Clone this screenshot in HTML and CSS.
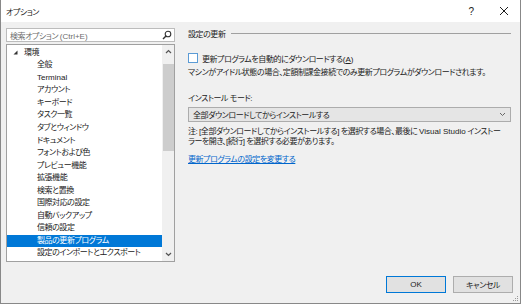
FILE: index.html
```html
<!DOCTYPE html>
<html>
<head>
  <title>オプション</title>
  <link rel="stylesheet" href="styles.css">
</head>
<body>
  <div class="window">
    <div class="titlebar">
      <span class="title">オプション</span>
      <span class="help en">?</span>
      <svg class="close" width="10" height="10" viewBox="0 0 10 10">
        <path d="M1 1 L9 9 M9 1 L1 9" stroke="#1e1e1e" stroke-width="1" fill="none"/>
      </svg>
    </div>

    <div class="content">
      <div class="left">
        <div class="search">
          <span class="placeholder">検索オプション <span class="en">(Ctrl+E)</span></span>
          <svg width="10" height="10" viewBox="0 0 10 10">
            <circle cx="6" cy="4" r="2.8" stroke="#333" stroke-width="1.1" fill="none"/>
            <path d="M4 6 L1 9" stroke="#333" stroke-width="1.4"/>
          </svg>
        </div>

        <div class="tree">
          <div class="items">
            <div class="row root">
              <svg class="twisty" width="5" height="5" viewBox="0 0 5 5"><polygon points="4.5,0.5 4.5,4.5 0.5,4.5" fill="#333"/></svg>
              環境
            </div>
            <div class="row">全般</div>
            <div class="row en">Terminal</div>
            <div class="row">アカウント</div>
            <div class="row">キーボード</div>
            <div class="row">タスク一覧</div>
            <div class="row">タブとウィンドウ</div>
            <div class="row">ドキュメント</div>
            <div class="row">フォントおよび色</div>
            <div class="row">プレビュー機能</div>
            <div class="row">拡張機能</div>
            <div class="row">検索と置換</div>
            <div class="row">国際対応の設定</div>
            <div class="row">自動バックアップ</div>
            <div class="row">信頼の設定</div>
            <div class="row selected">製品の更新プログラム</div>
            <div class="row">設定のインポートとエクスポート</div>
          </div>
          <div class="scrollbar">
            <svg class="arrow" width="11" height="16" viewBox="0 0 11 16"><path d="M3 8 L5.5 5.5 L8 8" stroke="#555" stroke-width="1.2" fill="none"/></svg>
            <div class="thumb"></div>
            <div class="track"></div>
            <svg class="arrow" width="11" height="14" viewBox="0 0 11 14"><path d="M3 6 L5.5 8.5 L8 6" stroke="#555" stroke-width="1.2" fill="none"/></svg>
          </div>
        </div>
      </div>

      <div class="right">
        <div class="heading">
          <span>設定の更新</span>
          <div class="rule"></div>
        </div>

        <label class="check">
          <span class="box"></span>
          <span>更新プログラムを自動的にダウンロードする<span class="en">(<u>A</u>)</span></span>
        </label>
        <p class="desc">マシンがアイドル状態の場合、定額制課金接続でのみ更新プログラムがダウンロードされます。</p>

        <p class="label">インストール モード:</p>
        <div class="select">
          <span>全部ダウンロードしてからインストールする</span>
          <svg width="7" height="5" viewBox="0 0 7 5"><path d="M1 1 L3.5 3.5 L6 1" stroke="#666" stroke-width="1" fill="none"/></svg>
        </div>

        <p class="note">注: [全部ダウンロードしてからインストールする] を選択する場合、最後に <span class="en">Visual Studio</span> インストー<br>ラーを開き、[続行] を選択する必要があります。</p>

        <a class="link" href="#">更新プログラムの設定を変更する</a>
      </div>
    </div>

    <div class="footer">
      <button class="btn default"><span class="en">OK</span></button>
      <button class="btn">キャンセル</button>
    </div>

    <svg class="grip" width="6" height="6" viewBox="0 0 6 6">
      <rect x="4" y="0" width="1" height="1" fill="#999"/>
      <rect x="2" y="2" width="1" height="1" fill="#999"/>
      <rect x="4" y="2" width="1" height="1" fill="#999"/>
      <rect x="0" y="4" width="1" height="1" fill="#999"/>
      <rect x="2" y="4" width="1" height="1" fill="#999"/>
      <rect x="4" y="4" width="1" height="1" fill="#999"/>
    </svg>
  </div>
</body>
</html>
```

FILE: styles.css
```css
body {
  margin: 0;
  font-family: "Liberation Sans", "Noto Sans CJK JP", sans-serif;
  font-feature-settings: "palt";
  font-size: 8px;
  letter-spacing: -0.45px;
  color: #222;
}
.en {
  letter-spacing: 0;
}
.window {
  position: relative;
  width: 521px;
  height: 304px;
  box-sizing: border-box;
  background-color: #f0f0f0;
  border: 1px solid #888;
  border-top: none;
  display: flex;
  flex-direction: column;
}
.titlebar {
  height: 22px;
  background-color: #fff;
  display: flex;
  align-items: center;
  padding-left: 5px;
  padding-right: 11px;
  flex-shrink: 0;
}
.title {
  flex: 1;
}
.help {
  font-size: 10px;
  margin-right: 25px;
}
.close {
  display: block;
}
.content {
  display: flex;
  padding: 5px 9px 0 5px;
  gap: 13px;
}
.left {
  width: 169px;
  margin-top: 1px;
}
.search {
  height: 14px;
  box-sizing: border-box;
  border: 1px solid #bcbcbc;
  background-color: #fff;
  display: flex;
  align-items: center;
  padding: 0 2px 0 3px;
}
.placeholder {
  flex: 1;
  color: #6d6d6d;
}
.tree {
  margin-top: 2px;
  height: 218px;
  box-sizing: border-box;
  border: 1px solid #a0a0a0;
  background-color: #fff;
  display: flex;
}
.items {
  flex: 1;
  padding-top: 1.7px;
  overflow: hidden;
}
.row {
  height: 12.56px;
  line-height: 12.56px;
  padding-left: 30px;
  white-space: nowrap;
}
.row.root {
  padding-left: 6px;
  display: flex;
  align-items: center;
}
.twisty {
  margin-right: 6px;
}
.row.selected {
  background-color: #0078d7;
  color: #fff;
}
.scrollbar {
  width: 12px;
  background-color: #f0f0f0;
  display: flex;
  flex-direction: column;
  align-items: center;
}
.scrollbar .arrow {
  display: block;
  flex-shrink: 0;
}
.thumb {
  width: 11px;
  height: 87px;
  background-color: #cdcdcd;
  margin-top: 3px;
}
.track {
  flex: 1;
}
.right {
  flex: 1;
}
.heading {
  display: flex;
  align-items: center;
  height: 12px;
}
.rule {
  flex: 1;
  height: 1px;
  background-color: #a0a0a0;
  margin-left: 6px;
}
.check {
  display: flex;
  align-items: center;
  height: 12px;
  margin-top: 13px;
}
.box {
  width: 10px;
  height: 10px;
  box-sizing: border-box;
  border: 1px solid #5b9bd5;
  background-color: #fff;
  margin-right: 4px;
}
.desc, .label {
  margin: 3px 0 0;
  line-height: 12px;
}
.label {
  margin-top: 14px;
}
.select {
  margin-top: 2px;
  height: 15px;
  box-sizing: border-box;
  border: 1px solid #acacac;
  background-color: #e5e5e5;
  display: flex;
  align-items: center;
  justify-content: space-between;
  padding: 0 4px;
}
.note {
  margin: 5px 0 0;
  line-height: 10px;
}
.link {
  display: inline-block;
  margin-top: 7px;
  line-height: 12px;
  color: #0066cc;
}
.footer {
  margin-top: auto;
  display: flex;
  justify-content: flex-end;
  gap: 7px;
  padding: 0 7px 10px 0;
}
.btn {
  width: 60px;
  height: 17px;
  padding: 0;
  font-family: inherit;
  font-feature-settings: "palt";
  font-size: 8px;
  letter-spacing: -0.45px;
  color: #222;
  background-color: #e1e1e1;
  border: 1px solid #adadad;
}
.btn.default {
  border-color: #0078d7;
}
.grip {
  position: absolute;
  right: 1px;
  bottom: 1px;
}
```
